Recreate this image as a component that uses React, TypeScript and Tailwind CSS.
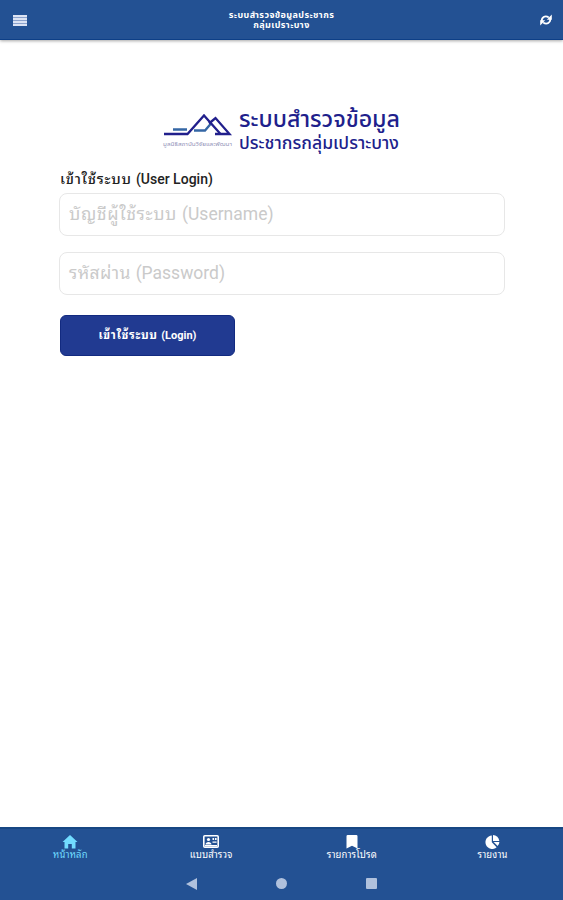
import React from "react";

const loopless = "font-['Roboto','Noto_Sans_Thai',sans-serif]";
const looped = "font-['Roboto','Noto_Sans_Thai_Looped','Noto_Looped_Thai','Loma','Garuda','Waree','Laksaman','Sarabun','Tlwg_Typo','Norasi','Noto_Serif_Thai',sans-serif]";

function Header() {
  return (
    <header className={`relative z-10 flex h-10 shrink-0 items-center justify-between border-b border-[#0d3f87] bg-[#235193] px-[13px] text-white shadow-[0_1px_3px_rgba(0,0,0,0.35)] ${loopless}`}>
      <button aria-label="menu" className="flex w-10 items-center pt-px">
        <svg width="14" height="11" viewBox="0 0 14 11" fill="#dce3f3">
          <rect width="14" height="11" fill="#8ba2cc" />
          <rect width="14" height="2" />
          <rect y="3" width="14" height="2" />
          <rect y="6" width="14" height="2" />
          <rect y="9" width="14" height="2" />
        </svg>
      </button>
      <h1 className="text-center text-[9px] leading-[10px] font-bold tracking-[0.39px] whitespace-nowrap">
        ระบบสำรวจข้อมูลประชากร
        <br />
        กลุ่มเปราะบาง
      </h1>
      <button aria-label="refresh" className="flex w-10 justify-end">
        <svg className="-mr-[2px]" width="12" height="12" viewBox="0 0 12 12" fill="none" stroke="#fff" strokeWidth="1.800">
          <path d="M1.800 7.500C1.200 3.500 5 1 8.800 3.500M10.200 4.500C10.800 8.500 7 11 3.200 8.500" />
          <path d="M11.800 .5v5.200H6.800zM.2 11.500V6.300h5z" fill="#fff" stroke="none" />
        </svg>
      </button>
    </header>
  );
}

function Logo() {
  return (
    <svg className="block overflow-visible" width="240" height="50" viewBox="0 0 240 50" fontFamily="Roboto, 'Noto Sans Thai', sans-serif" fill="#211f8c">
      <g fill="none" strokeWidth="2.300">
        <path d="M11 25.500h14M32 26.500h11l6-7" stroke="#3567a5" />
        <path d="M2 30h23.500L42 11.500 58.500 30" stroke="#211f8c" />
        <path d="M47 19.500l6.500-5.500L67.500 30H53" stroke="#211f8c" />
      </g>
      <text x="1" y="42" fontSize="5.500" textLength="69" lengthAdjust="spacingAndGlyphs" fill="#9292b8">มูลนิธิสถาบันวิจัยและพัฒนา</text>
      <text x="77" y="23" fontSize="22.500" fontWeight="500" textLength="161" lengthAdjust="spacingAndGlyphs">ระบบสำรวจข้อมูล</text>
      <text x="77" y="44.500" fontSize="17" fontWeight="500" textLength="160" lengthAdjust="spacingAndGlyphs">ประชากรกลุ่มเปราะบาง</text>
    </svg>
  );
}

function Field({ thai, latin, thaiClass }: { thai: string; latin: string; thaiClass: string }) {
  return (
    <div role="textbox" className="flex h-[43px] w-full items-center rounded-lg border-[1.500px] border-[#e7e7e7] bg-white px-[9px] text-[17.500px] whitespace-pre text-[#cacaca]">
      <span>
        <span className={thaiClass}>{thai} </span>
        {latin}
      </span>
    </div>
  );
}

function HomeIcon() {
  return (
    <svg width="16" height="14" viewBox="0 0 16 14" fill="currentColor">
      <path d="M8 0l7.500 7h-2v6.500H9.800V9H6.200v4.500H2.500V7h-2z" />
    </svg>
  );
}

function CardIcon() {
  return (
    <svg width="16" height="13" viewBox="0 0 16 13">
      <rect x=".8" y=".8" width="14.400" height="11.400" rx="1" fill="#235193" stroke="#fff" strokeWidth="1.600" />
      <circle cx="5.500" cy="4.500" r="1.600" fill="#fff" />
      <path d="M2.500 9.500c0-3.500 6-3.500 6 0zM9.500 3h1.600v2H9.500zM12 3h1.600v2H12zM9.500 6.500h4.100v1.200H9.500zM2 10h12v1.500H2z" fill="#fff" />
    </svg>
  );
}

function BookmarkIcon() {
  return (
    <svg width="12" height="14" viewBox="0 0 12 14" fill="#fff">
      <path d="M.500 1.200Q.500 0 1.700 0h8.600q1.200 0 1.200 1.200V13.500L6 10.800.500 13.500z" />
    </svg>
  );
}

function PieIcon() {
  return (
    <svg width="15" height="14" viewBox="0 0 15 14" fill="#fff">
      <path d="M6.800 .5v6.700l4.800 5A6.700 6.700 0 1 1 6.800.5z" />
      <path d="M8 0a6.500 6.500 0 0 1 6.300 6H8z" />
      <path d="M8.600 7h5.800a6 6 0 0 1-1.800 4z" />
    </svg>
  );
}

const tabs = [
  { label: "หน้าหลัก", icon: <HomeIcon />, color: "text-[#72dcff]" },
  { label: "แบบสำรวจ", icon: <CardIcon />, color: "text-white" },
  { label: "รายการโปรด", icon: <BookmarkIcon />, color: "text-white" },
  { label: "รายงาน", icon: <PieIcon />, color: "text-white" },
];

export default function App() {
  return (
    <div className={`flex h-[900px] w-[563px] flex-col overflow-hidden bg-white ${looped}`}>
      <Header />
      <main className="flex-1 pt-[64px] pr-[58px] pl-[59px]">
        <div className="pl-[103px]">
          <Logo />
        </div>
        <h2 className="mt-[15px] h-[24px] pl-px text-[14px] leading-5 font-medium whitespace-nowrap text-[#222]">
          <span className="text-[14.500px] tracking-[0.75px]">เข้าใช้ระบบ </span>(User Login)
        </h2>
        <div className="flex flex-col gap-4">
          <Field thai="บัญชีผู้ใช้ระบบ" latin="(Username)" thaiClass="tracking-[0.62px]" />
          <Field thai="รหัสผ่าน" latin="(Password)" thaiClass="tracking-[0.4px]" />
        </div>
        <button className="mt-5 ml-px flex h-[41px] w-[175px] items-center justify-center rounded-md border border-[#122a80] bg-[#213a91] pt-px text-[11px] font-bold text-white">
          <span>
            <span className="text-[11.500px] tracking-[0.65px]">เข้าใช้ระบบ </span>(Login)
          </span>
        </button>
      </main>
      <footer className="h-[73px] shrink-0 border-t-2 border-[#174783] bg-[#235193]">
        <nav className="grid h-[38px] grid-cols-4">
          {tabs.map((t) => (
            <div key={t.label} className={`flex flex-col items-center pt-[5px] ${t.color}`}>
              <span className="flex h-[15px] items-center">{t.icon}</span>
              <span className="text-[9.500px] leading-[12px] tracking-[0.15px] whitespace-nowrap">{t.label}</span>
            </div>
          ))}
        </nav>
        <div className="flex h-[33px] items-center justify-center gap-[79px]">
          <svg width="11" height="12" viewBox="0 0 11 12" fill="#b0c1dd"><path d="M11 0v12L0 6z" /></svg>
          <span className="size-[11px] rounded-full bg-[#b0c1dd]" />
          <span className="size-[11px] rounded-[1px] bg-[#b0c1dd]" />
        </div>
      </footer>
    </div>
  );
}
